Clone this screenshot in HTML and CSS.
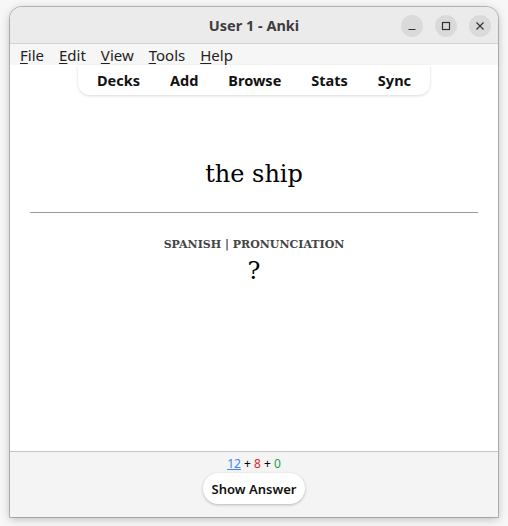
FILE: index.html
```html
<!DOCTYPE html>
<html>
<head>
<meta charset="utf-8">
<link rel="stylesheet" href="styles.css">
</head>
<body>
<div class="window">
  <div class="titlebar">
    <div class="title">User 1 - Anki</div>
    <div class="controls">
      <span class="ctl"><svg width="12" height="12" viewBox="0 0 12 12"><path d="M2.5 9.5h7" stroke="#333" stroke-width="1.2"/></svg></span>
      <span class="ctl"><svg width="12" height="12" viewBox="0 0 12 12"><rect x="2.5" y="2.5" width="7" height="7" fill="none" stroke="#333" stroke-width="1.2"/></svg></span>
      <span class="ctl"><svg width="12" height="12" viewBox="0 0 12 12"><path d="M2.5 2.5l7 7M9.5 2.5l-7 7" stroke="#333" stroke-width="1.2"/></svg></span>
    </div>
  </div>
  <div class="menubar">
    <span class="menu"><u>F</u>ile</span>
    <span class="menu"><u>E</u>dit</span>
    <span class="menu"><u>V</u>iew</span>
    <span class="menu"><u>T</u>ools</span>
    <span class="menu"><u>H</u>elp</span>
  </div>
  <div class="content">
    <div class="toolbar">
      <span class="tb">Decks</span>
      <span class="tb">Add</span>
      <span class="tb">Browse</span>
      <span class="tb">Stats</span>
      <span class="tb">Sync</span>
    </div>
    <div class="card">
      <div class="front">the ship</div>
      <div class="rule"></div>
      <div class="label">Spanish | Pronunciation</div>
      <div class="answer">?</div>
    </div>
  </div>
  <div class="bottom">
    <div class="counts"><span class="new">12</span> + <span class="learn">8</span> + <span class="review">0</span></div>
    <button class="show">Show Answer</button>
  </div>
</div>
</body>
</html>
```
FILE: styles.css
```css
html, body { margin: 0; padding: 0; }
body {
  width: 508px;
  height: 526px;
  background: #f7f7f7;
  padding: 7px 10px 0 10px;
  box-sizing: border-box;
  font-family: "Noto Sans", "Open Sans", sans-serif;
  overflow: hidden;
}
.window {
  width: 488px;
  height: 510px;
  background: #fff;
  border-radius: 12px 12px 0 0;
  box-shadow: 0 0 0 1px rgba(0,0,0,0.22), 0 2px 10px rgba(0,0,0,0.25);
  display: flex;
  flex-direction: column;
  overflow: hidden;
}
.titlebar {
  height: 36px;
  background: #ebebeb;
  border-bottom: 1px solid #d2d2d2;
  position: relative;
  display: flex;
  align-items: center;
  justify-content: center;
  flex-shrink: 0;
}
.title {
  font-weight: 700;
  font-size: 14.5px;
  color: #3d3d3d;
}
.controls {
  position: absolute;
  right: 7px;
  top: 8px;
  display: flex;
  gap: 12px;
}
.ctl {
  width: 22px;
  height: 22px;
  border-radius: 50%;
  background: #dadada;
  display: flex;
  align-items: center;
  justify-content: center;
}
.menubar {
  height: 21px;
  background: #f6f6f6;
  display: flex;
  align-items: center;
  padding-left: 10px;
  font-size: 15px;
  color: #222;
  flex-shrink: 0;
}
.menu { margin-right: 15px; }
.menu u { text-decoration-thickness: 1px; text-underline-offset: 2px; }
.content {
  flex: 1;
  display: flex;
  flex-direction: column;
  align-items: center;
  background: #fff;
}
.toolbar {
  width: 352px;
  height: 30px;
  box-sizing: border-box;
  background: #fff;
  border-radius: 0 0 12px 12px;
  box-shadow: 0 1px 3px rgba(0,0,0,0.15);
  display: flex;
  align-items: center;
  justify-content: center;
  font-weight: 700;
  font-size: 14.5px;
  color: #111;
}
.tb { padding: 0 15px; }
.card {
  align-self: stretch;
  display: flex;
  flex-direction: column;
  align-items: center;
  font-family: "DejaVu Serif", serif;
  color: #000;
  padding: 0 20px;
}
.front {
  font-size: 24px;
  margin-top: 63px;
  line-height: 32px;
}
.rule {
  align-self: stretch;
  height: 1px;
  background: #9a9a9a;
  margin-top: 22px;
}
.label {
  margin-top: 24px;
  text-transform: uppercase;
  font-weight: 700;
  font-size: 11px;
  color: #444;
  line-height: 16px;
}
.answer {
  font-size: 24px;
  line-height: 28px;
  margin-top: 4px;
}
.bottom {
  height: 66px;
  background: #f4f4f4;
  border-top: 1px solid #c4c4c4;
  box-sizing: border-box;
  display: flex;
  flex-direction: column;
  align-items: center;
  flex-shrink: 0;
}
.counts {
  font-size: 12px;
  margin-top: 4px;
  line-height: 16px;
  color: #000;
}
.new { color: #3b82f6; text-decoration: underline; }
.learn { color: #dc2626; }
.review { color: #16a34a; }
.show {
  margin-top: 1px;
  width: 102px;
  height: 31px;
  border: none;
  border-radius: 16px;
  background: #fff;
  box-shadow: 0 1px 3px rgba(0,0,0,0.25);
  font-family: "Noto Sans", "Open Sans", sans-serif;
  font-size: 13px;
  font-weight: 600;
  color: #111;
  padding: 0;
}
```
